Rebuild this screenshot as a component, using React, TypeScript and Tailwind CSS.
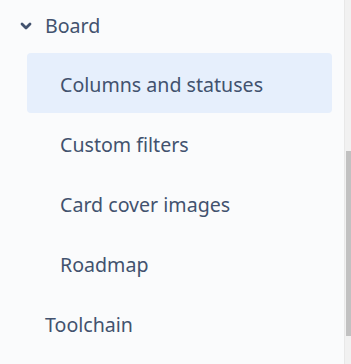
import React from "react";

const items = ["Columns and statuses", "Custom filters", "Card cover images", "Roadmap"];

export default function App() {
  return (
    <div className="flex h-[364px] w-[351px] overflow-hidden bg-[#fafbfc]" style={{ fontFamily: '"Noto Sans", sans-serif' }}>
      <div className="flex flex-1 flex-col text-[19.6px] text-[#42526e]">
        <div className="flex h-[53px] items-center pb-[1px]">
          <svg className="ml-[19px] mr-[12px] h-[14px] w-[14px]" viewBox="0 0 14 14">
            <path d="M3 5 L7 9 L11 5" fill="none" stroke="#42526e" strokeWidth="2.8" strokeLinecap="round" strokeLinejoin="round" />
          </svg>
          <span>Board</span>
        </div>
        {items.map((t, i) => (
          <div
            key={t}
            className={
              i === 0
                ? "ml-[27px] mr-[12px] flex h-[60px] items-center rounded-[4px] bg-[#e6effc] pl-[33px] pt-[3px]"
                : "ml-[27px] mr-[12px] flex h-[60px] items-center pl-[33px] pt-[3px]"
            }
          >
            {t}
          </div>
        ))}
        <div className="flex h-[60px] items-center pl-[45px] pt-[3px]">Toolchain</div>
      </div>
      <div className="flex h-full w-[7px] flex-col border-l border-[#e8e8e8] bg-[#f1f1f1]">
        <div className="ml-[1px] mt-[151px] h-[185px] w-[5px] bg-[#c1c1c1]" />
      </div>
    </div>
  );
}
